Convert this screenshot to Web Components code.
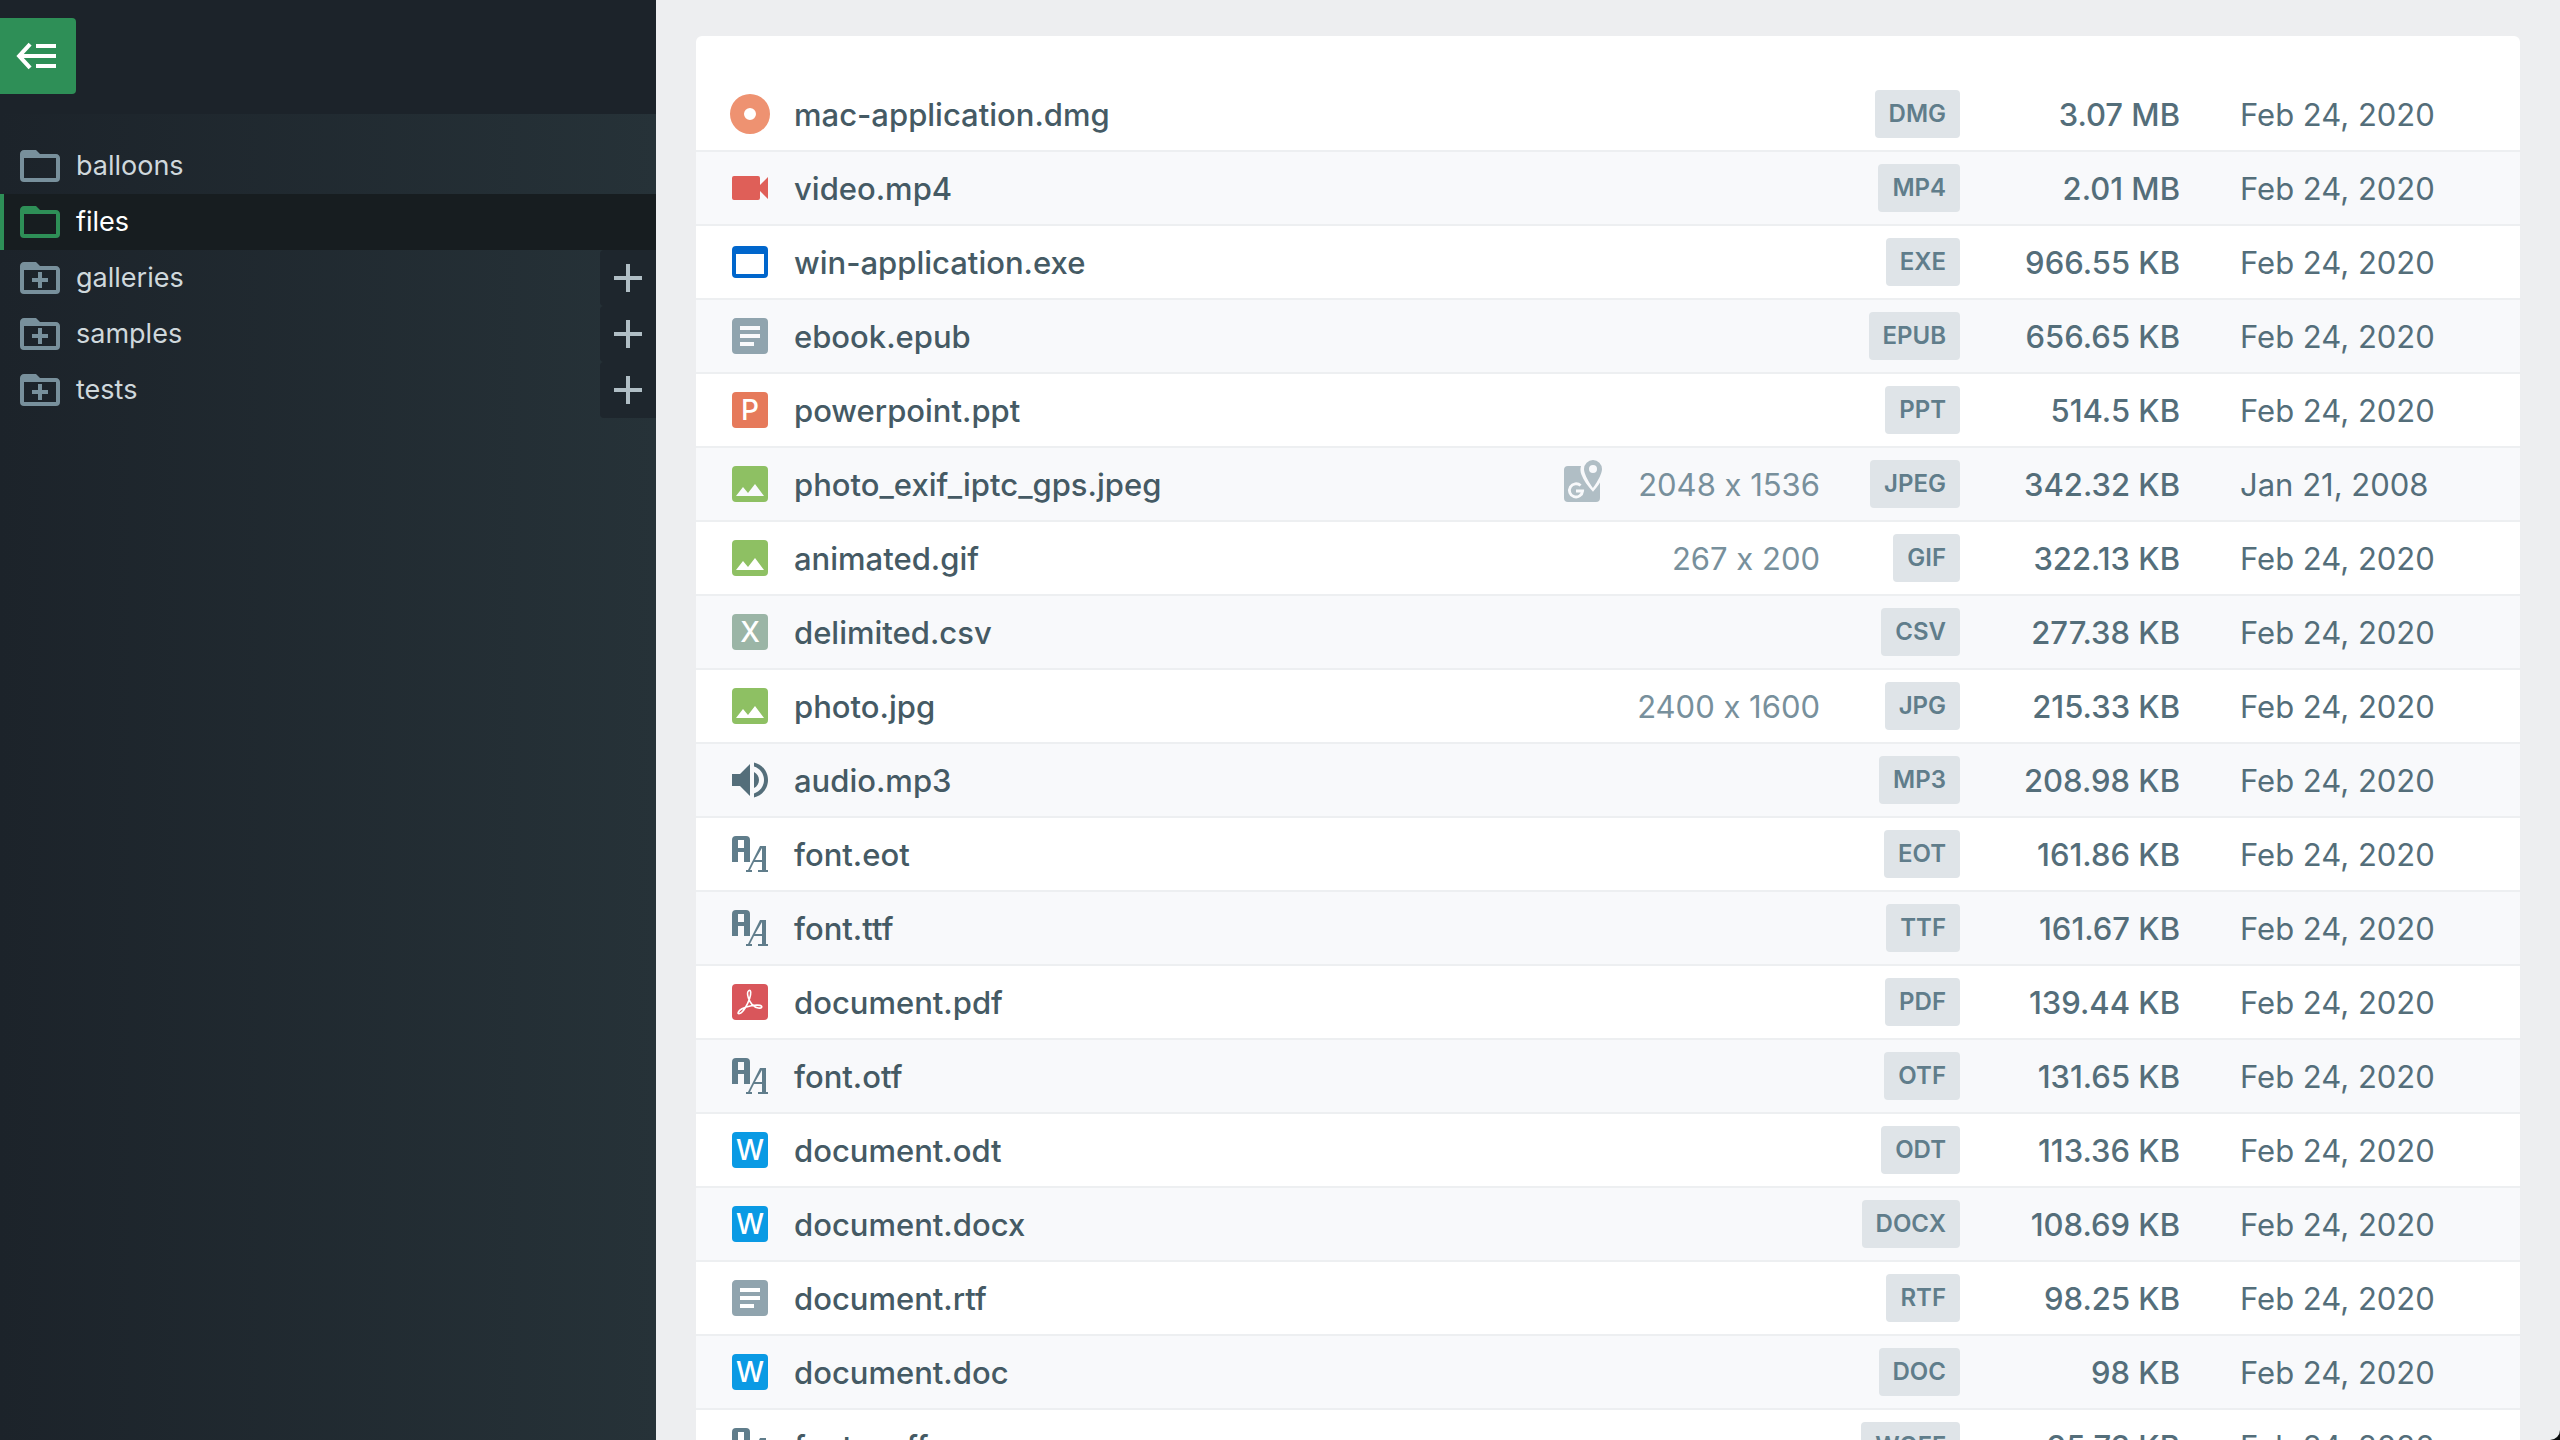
<!DOCTYPE html>
<html lang="en">
<head>
    <meta charset="UTF-8">
    <meta name="viewport" content="width=device-width, initial-scale=1.0">
    <title>files</title>
    <style>
        html{
            height:100%;
            background:#0b0d0e;
        }
        body{
            margin:0;
            height:100%;
            font-family:Inter, "Liberation Sans", sans-serif;
            overflow:hidden;
        }
    </style>
</head>
<body>

<template id="app">
    <style>
        :host{
            display:flex;
            height:100%;
            overflow:hidden;
            background:#edeef0;
            border-bottom-right-radius:10px;
        }
        main{
            flex:1;
            min-width:0;
            padding:36px 40px;
        }
    </style>
    <slot name="side"></slot>
    <main><slot></slot></main>
</template>

<template id="sidebar">
    <style>
        :host{
            display:flex;
            flex-direction:column;
            flex:none;
            width:656px;
            color:#cfd8dc;
            background:linear-gradient(to right, #1c232a, #263238);
        }
        header{
            display:flex;
            height:96px;
            padding-top:18px;
            background:#1c232a;
        }
        button{
            display:grid;
            place-items:center;
            width:76px;
            height:76px;
            padding:0;
            border:0;
            border-radius:0 4px 4px 0;
            background:#2e8f57;
            color:#fff;
        }
        nav{
            padding-top:24px;
        }
    </style>
    <header>
        <button aria-label="Hide menu"><file-icon name="menu"></file-icon></button>
    </header>
    <nav><slot></slot></nav>
</template>

<template id="item">
    <style>
        :host{
            display:flex;
            height:56px;
        }
        a{
            flex:1;
            display:flex;
            align-items:center;
            gap:12px;
            padding-left:16px;
            color:inherit;
            font-size:27px;
            line-height:56px;
            text-decoration:none;
        }
        a file-icon{
            color:#78909c;
        }
        button{
            display:grid;
            place-items:center;
            width:56px;
            padding:0;
            border:0;
            border-radius:4px 0 0 4px;
            background:#1e262d;
            color:#b0bec5;
        }
        :host([active]){
            background:#171d20;
            color:#fff;
            box-shadow:inset 4px 0 #2e8f57;
        }
        :host([active]) file-icon{
            color:#2e8f57;
        }
        :host(:not([more])) button{
            display:none;
        }
    </style>
    <a href="#"><file-icon></file-icon><slot></slot></a>
    <button aria-label="Expand"><file-icon name="plus"></file-icon></button>
</template>

<template id="list">
    <style>
        :host{
            display:block;
            padding-top:42px;
            border-radius:6px;
            background:#fff;
        }
        table{
            width:100%;
            border-collapse:separate;
            border-spacing:0;
            color:#546e7a;
            font-size:31px;
            line-height:40px;
            font-variant-ligatures:no-contextual;
            white-space:nowrap;
        }
        td{
            height:72px;
            padding:0;
            border-bottom:2px solid #edeff1;
            text-align:right;
        }
        tr:nth-child(even){
            background:#f8f9fb;
        }
        .icon{
            width:68px;
            padding-left:30px;
            text-align:left;
        }
        .name a{
            color:#455a64;
            font-weight:500;
            text-decoration:none;
        }
        .name, .size, .date{
            height:70px;
            padding-top:2px;
        }
        .name, .date{
            text-align:left;
        }
        .dim{
            width:280px;
            color:#78909c;
        }
        .dim div{
            display:flex;
            justify-content:flex-end;
            align-items:center;
            gap:32px;
        }
        .dim span{
            padding-top:2px;
        }
        .dim file-icon{
            color:#b0bec5;
        }
        .ext{
            width:140px;
        }
        .ext span{
            display:inline-block;
            padding:0 14px;
            border-radius:4px;
            background:#dfe4e8;
            color:#607d8b;
            font-size:24px;
            font-weight:600;
            line-height:48px;
            vertical-align:middle;
        }
        .size{
            width:220px;
            font-weight:500;
        }
        .date{
            width:280px;
            padding-left:60px;
        }
    </style>
    <table><tbody></tbody></table>
</template>

<script>

    const icons = {
        menu: '<path d="M1.200 12 7.300 5.400l1.500 1.400L4.900 11H21v2H4.900l3.900 4.200-1.500 1.400zM11 6h10v2H11zM11 16h10v2H11z"/>',
        plus: '<path d="M11 5h2v6h6v2h-6v6h-2v-6H5v-2h6z"/>',
        folder: '<path d="M20 18H4V8h16m0-2h-8l-2-2H4c-1.110 0-2 .890-2 2v12a2 2 0 0 0 2 2h16a2 2 0 0 0 2-2V8c0-1.110-.900-2-2-2z"/>',
        disc: '<path fill="#ee9271" d="M12 2a10 10 0 1 0 0 20 10 10 0 0 0 0-20m0 7a3 3 0 1 1 0 6 3 3 0 0 1 0-6z"/>',
        video: '<path fill="#df5f58" d="M17 10.500V7a1 1 0 0 0-1-1H4a1 1 0 0 0-1 1v10a1 1 0 0 0 1 1h12a1 1 0 0 0 1-1v-3.500l4 4v-11z"/>',
        app: '<path fill="#0066cc" d="M19 4H5a2 2 0 0 0-2 2v12a2 2 0 0 0 2 2h14a2 2 0 0 0 2-2V6a2 2 0 0 0-2-2m0 14H5V8h14z"/>',
        text: '<path fill="#90a4ae" d="M14 17H7v-2h7m3-2H7v-2h10m0-2H7V7h10m2-4H5c-1.110 0-2 .890-2 2v14a2 2 0 0 0 2 2h14a2 2 0 0 0 2-2V5a2 2 0 0 0-2-2z"/>',
        image: '<path fill="#8ec063" d="M5 3h14a2 2 0 0 1 2 2v14a2 2 0 0 1-2 2H5a2 2 0 0 1-2-2V5a2 2 0 0 1 2-2m0 15h14l-4.500-6-3.500 4.500-2.500-3z"/>',
        audio: '<path fill="#546e7a" d="M14 3.230v2.060c2.890.860 5 3.540 5 6.710s-2.110 5.840-5 6.700v2.070c4-.910 7-4.490 7-8.770s-3-7.860-7-8.770M16.500 12c0-1.770-1-3.290-2.500-4.030V16c1.500-.710 2.500-2.240 2.500-4M3 9v6h4l5 5V4L7 9z"/>',
        font: '<path fill="#607d8b" d="M5 3h5a2 2 0 0 1 2 2v11H9v-5H6v5H3V5a2 2 0 0 1 2-2m1 2v4h3V5z"/><path fill="#607d8b" d="M17 8h3v12h1v1h-5v-1h2v-4h-4l-2 4h1v1h-3v-1h1zm1 1-3.500 6H18z"/>',
        pdf: '<rect x="3" y="3" width="18" height="18" rx="2" fill="#d9565b"/><path fill="none" stroke="#fff" stroke-width=".8" d="M11.400 6.300c1.200-.6 1.200 1.600.4 4-1 3-3.300 7-5 7.500-1.400.4-.8-1.300 1.200-2.400 2.500-1.400 7-2.200 9-1.700 1.600.4.900 1.600-.9 1.300-2-.4-4-2.300-4.900-5-.5-1.600-.5-3.300.2-3.700z"/>',
        gps: '<path d="M5 3h6.500c-.400 1.200-.400 2.700.200 4.200 1 2.800 3.200 5.900 5.800 8.700 1.300-1.400 2.500-3 3.500-4.600V19a2 2 0 0 1-2 2H5a2 2 0 0 1-2-2V5a2 2 0 0 1 2-2z"/><path d="M17.500 0A4.500 4.500 0 0 0 13 4.500c0 3.400 4.500 9.500 4.500 9.500S22 7.900 22 4.500A4.500 4.500 0 0 0 17.500 0m0 2.500a2 2 0 1 1 0 4 2 2 0 0 1 0-4z"/><path fill="none" stroke="#f8f9fb" stroke-width="1.400" d="M11.300 12.800a3.300 3.300 0 1 0 1 2.700H9"/>'
    };
    icons.folderPlus = icons.folder + '<path d="M11 9h2v3h3v2h-3v3h-2v-3H8v-2h3z"/>';

    // Буква на цветном квадрате
    const letter = (color, char) => `<rect x="3" y="3" width="18" height="18" rx="2" fill="${color}"/>
        <text x="12" y="17" text-anchor="middle" font-size="14" font-weight="500" fill="#fff">${char}</text>`;
    icons.ppt = letter('#e67a5b', 'P');
    icons.csv = letter('#9bb5a6', 'X');
    icons.word = letter('#0a9ae4', 'W');

    const files = [
        {icon: 'disc', name: 'mac-application.dmg', size: '3.07 MB'},
        {icon: 'video', name: 'video.mp4', size: '2.01 MB'},
        {icon: 'app', name: 'win-application.exe', size: '966.55 KB'},
        {icon: 'text', name: 'ebook.epub', size: '656.65 KB'},
        {icon: 'ppt', name: 'powerpoint.ppt', size: '514.5 KB'},
        {icon: 'image', name: 'photo_exif_iptc_gps.jpeg', size: '342.32 KB', dim: '2048 x 1536', gps: true, date: 'Jan 21, 2008'},
        {icon: 'image', name: 'animated.gif', size: '322.13 KB', dim: '267 x 200'},
        {icon: 'csv', name: 'delimited.csv', size: '277.38 KB'},
        {icon: 'image', name: 'photo.jpg', size: '215.33 KB', dim: '2400 x 1600'},
        {icon: 'audio', name: 'audio.mp3', size: '208.98 KB'},
        {icon: 'font', name: 'font.eot', size: '161.86 KB'},
        {icon: 'font', name: 'font.ttf', size: '161.67 KB'},
        {icon: 'pdf', name: 'document.pdf', size: '139.44 KB'},
        {icon: 'font', name: 'font.otf', size: '131.65 KB'},
        {icon: 'word', name: 'document.odt', size: '113.36 KB'},
        {icon: 'word', name: 'document.docx', size: '108.69 KB'},
        {icon: 'text', name: 'document.rtf', size: '98.25 KB'},
        {icon: 'word', name: 'document.doc', size: '98 KB'},
        {icon: 'font', name: 'font.woff', size: '95.73 KB'}
    ];

    class BaseElement extends HTMLElement{
        constructor(id){
            super();
            const shadow = this.attachShadow({mode:'open'});
            shadow.appendChild(document.importNode(document.querySelector(id).content, true));
        }
    }

    class FileIcon extends HTMLElement{
        constructor(){
            super();
            this.attachShadow({mode:'open'});
        }
        static get observedAttributes(){
            return ['name'];
        }
        attributeChangedCallback(attr, old, value){
            this.shadowRoot.innerHTML = `
                <style>
                    :host{ display:block; flex:none; width:48px; height:48px; }
                    svg{ display:block; fill:currentColor; }
                </style>
                <svg viewBox="0 0 24 24" width="48" height="48" aria-hidden="true">${icons[value] || ''}</svg>
            `;
        }
    }

    class FilesApp extends BaseElement{
        constructor(){ super('#app'); }
    }

    class FilesSidebar extends BaseElement{
        constructor(){ super('#sidebar'); }
    }

    class FolderItem extends BaseElement{
        constructor(){ super('#item'); }
        connectedCallback(){
            this.shadowRoot.querySelector('a file-icon').setAttribute('name', this.hasAttribute('more') ? 'folderPlus' : 'folder');
        }
    }

    class FileList extends BaseElement{
        constructor(){ super('#list'); }
        connectedCallback(){
            this.shadowRoot.querySelector('tbody').innerHTML = files.map((f) => `
                <tr>
                    <td class="icon"><file-icon name="${f.icon}"></file-icon></td>
                    <td class="name"><a href="#">${f.name}</a></td>
                    <td class="dim"><div>${f.gps ? '<file-icon name="gps"></file-icon>' : ''}<span>${f.dim || ''}</span></div></td>
                    <td class="ext"><span>${f.name.split('.').pop().toUpperCase()}</span></td>
                    <td class="size">${f.size}</td>
                    <td class="date">${f.date || 'Feb 24, 2020'}</td>
                </tr>
            `).join('');
        }
    }

    customElements.define('file-icon', FileIcon);
    customElements.define('files-app', FilesApp);
    customElements.define('files-sidebar', FilesSidebar);
    customElements.define('folder-item', FolderItem);
    customElements.define('file-list', FileList);

</script>

<files-app>
    <files-sidebar slot="side">
        <folder-item>balloons</folder-item>
        <folder-item active>files</folder-item>
        <folder-item more>galleries</folder-item>
        <folder-item more>samples</folder-item>
        <folder-item more>tests</folder-item>
    </files-sidebar>
    <file-list></file-list>
</files-app>
</body>
</html>
